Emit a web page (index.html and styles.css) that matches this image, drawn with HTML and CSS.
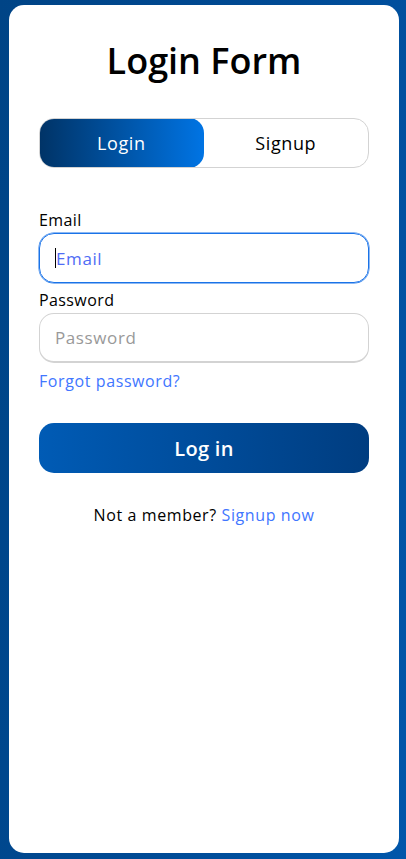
FILE: index.html
```html
<!DOCTYPE html>
<html lang="en">
<head>
<meta charset="utf-8">
<title>Login Form</title>
<link rel="stylesheet" href="styles.css">
</head>
<body>
<div class="wrapper">
  <h1 class="title">Login Form</h1>
  <div class="slide-controls">
    <div class="slide active">Login</div>
    <div class="slide">Signup</div>
  </div>
  <form class="form">
    <label class="label" for="email">Email</label>
    <div class="input focused"><span class="caret"></span><span class="ph ph-focus">Email</span></div>
    <label class="label label-2" for="password">Password</label>
    <div class="input"><span class="ph">Password</span></div>
    <a class="pass-link" href="#">Forgot password?</a>
    <button class="btn" type="button">Log in</button>
    <p class="signup-link">Not a member? <a href="#">Signup now</a></p>
  </form>
</div>
</body>
</html>
```
FILE: styles.css
```css
* { box-sizing: border-box; margin: 0; padding: 0; }
html, body { height: 100%; }
body {
  font-family: "Open Sans", "Noto Sans", sans-serif;
  background: linear-gradient(100deg, #004486 0%, #004a94 50%, #0056aa 100%);
  padding: 5px 7px 6px 9px;
}
.wrapper {
  width: 390px;
  height: 848px;
  background: #fff;
  border-radius: 15px;
  padding: 30px;
}
.title {
  font-size: 36px;
  font-weight: 600;
  line-height: 52px;
  text-align: center;
  color: #000;
}
.slide-controls {
  margin-top: 31px;
  height: 50px;
  border: 1px solid #d3d3d3;
  border-radius: 15px;
  display: flex;
  overflow: hidden;
}
.slide {
  flex: 1;
  display: flex;
  align-items: center;
  justify-content: center;
  font-size: 18px;
  font-weight: 500;
  letter-spacing: 0.6px;
  color: #000;
}
.slide.active {
  color: #fff;
  border-radius: 15px;
  margin: -1px 0 -1px -1px;
  background: linear-gradient(to right, #003366, #0074e4);
}
.form { display: flex; flex-direction: column; }
.label {
  margin-top: 41px;
  font-size: 16px;
  letter-spacing: 0.4px;
  line-height: 22px;
  color: #000;
}
.label-2 { margin-top: 6px; }
.input {
  margin-top: 2px;
  height: 50px;
  border: 1px solid #d3d3d3;
  border-bottom-width: 2px;
  border-radius: 15px;
  display: flex;
  align-items: center;
  padding-left: 15px;
  font-size: 17px;
  letter-spacing: 0.6px;
}
.input.focused { border: 1px solid #1a73e8; box-shadow: 0 0 0 0.5px #1a73e8; }
.caret { width: 1px; height: 20px; background: #000; }
.ph { color: #999; }
.ph-focus { color: #4f6cf5; }
.pass-link {
  margin-top: 7px;
  font-size: 16px;
  letter-spacing: 0.6px;
  line-height: 22px;
  color: #4176ff;
  text-decoration: none;
}
.btn {
  margin-top: 31px;
  height: 50px;
  border: none;
  border-radius: 15px;
  background: linear-gradient(to right, #005bb5, #003d80);
  color: #fff;
  font-family: inherit;
  font-size: 20px;
  font-weight: 600;
  letter-spacing: 0.3px;
}
.signup-link {
  margin-top: 31px;
  text-align: center;
  font-size: 16px;
  letter-spacing: 0.6px;
  line-height: 22px;
  color: #000;
}
.signup-link a { color: #4176ff; text-decoration: none; }
```
